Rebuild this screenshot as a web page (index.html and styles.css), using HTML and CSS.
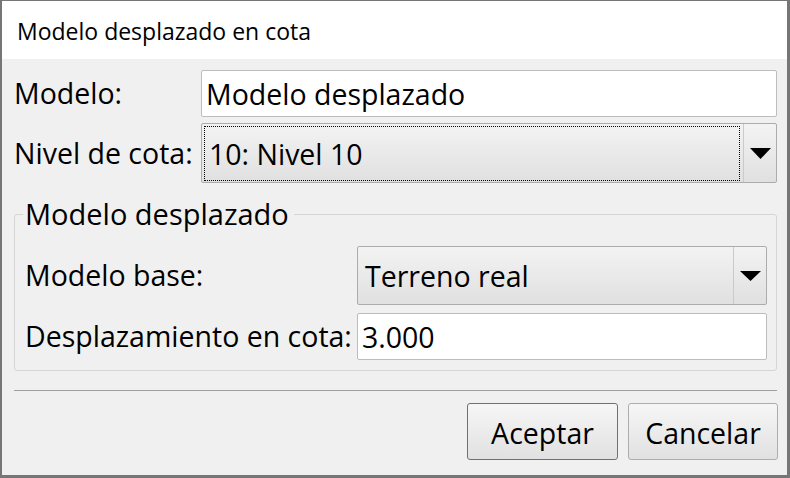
FILE: index.html
```html
<!DOCTYPE html>
<html lang="es">
<head>
<meta charset="utf-8">
<title>Modelo desplazado en cota</title>
<link rel="stylesheet" href="styles.css">
</head>
<body>
<div class="window">
  <div class="titlebar">Modelo desplazado en cota</div>
  <div class="content">
    <div class="row">
      <div class="lbl">Modelo:</div>
      <div class="field">Modelo desplazado</div>
    </div>
    <div class="row">
      <div class="lbl">Nivel de cota:</div>
      <div class="combo">
        <div class="combo-main focused"><div class="focus-rect">10: Nivel 10</div></div>
        <div class="combo-btn"><svg class="arrow" width="21" height="11" viewBox="0 0 21 11"><polygon points="0,0 21,0 10.5,11" fill="#000"/></svg></div>
      </div>
    </div>
    <fieldset class="group">
      <legend>Modelo desplazado</legend>
      <div class="grow">
        <div class="glbl">Modelo base:</div>
        <div class="combo small">
          <div class="combo-main"><div class="combo-text">Terreno real</div></div>
          <div class="combo-btn"><svg class="arrow" width="21" height="10" viewBox="0 0 21 10"><polygon points="0,0 21,0 10.5,10" fill="#000"/></svg></div>
        </div>
      </div>
      <div class="grow">
        <div class="glbl">Desplazamiento en cota:</div>
        <div class="field">3.000</div>
      </div>
    </fieldset>
    <div class="sep"></div>
    <div class="buttons">
      <button class="btn default">Aceptar</button>
      <button class="btn">Cancelar</button>
    </div>
  </div>
</div>
</body>
</html>
```
FILE: styles.css
```css
html, body {
  margin: 0;
  padding: 0;
  background: #ffffff;
}

.window {
  width: 790px;
  height: 478px;
  box-sizing: border-box;
  border-style: solid;
  border-color: #767676;
  border-width: 1px 3px 3px 2px;
  background: #f0f0f0;
  display: flex;
  flex-direction: column;
  font-family: "Open Sans", "Noto Sans", sans-serif;
  color: #000;
  overflow: hidden;
}

.titlebar {
  height: 58px;
  flex: none;
  background: #ffffff;
  display: flex;
  align-items: center;
  padding-left: 15px;
  padding-top: 2px;
  box-sizing: border-box;
  font-size: 23px;
}

.content {
  padding: 11px 10px 0 12px;
  display: flex;
  flex-direction: column;
  font-size: 28.5px;
}

.row {
  display: flex;
  align-items: center;
}

.row + .row {
  margin-top: 6px;
}

.lbl {
  width: 187px;
  flex: none;
  line-height: 1;
  white-space: nowrap;
}

.field {
  flex: 1;
  height: 47px;
  box-sizing: border-box;
  border: 1px solid #bdbdbd;
  border-radius: 2px;
  background: #ffffff;
  padding-left: 4px;
  display: flex;
  align-items: center;
  white-space: nowrap;
}

.combo {
  flex: 1;
  height: 60px;
  box-sizing: border-box;
  border: 1px solid #acacac;
  border-radius: 2px;
  background: linear-gradient(#f3f3f3, #e0e0e0);
  display: flex;
}

.combo.small {
  height: 59px;
}

.combo-main {
  flex: 1;
  display: flex;
}

.combo-main.focused {
  padding: 2px 3px 1px 2px;
}

.focus-rect {
  flex: 1;
  border: 1px dotted #000;
  display: flex;
  align-items: center;
  padding-left: 4px;
  white-space: nowrap;
}

.combo-text {
  display: flex;
  align-items: center;
  padding-left: 7px;
  white-space: nowrap;
}

.combo-btn {
  width: 33px;
  flex: none;
  box-sizing: border-box;
  border-left: 1px solid #cacaca;
  display: flex;
  align-items: center;
  justify-content: center;
  padding-left: 1px;
}

.arrow {
  display: block;
}

.group {
  margin: 15px 0 0 0;
  border: 1px solid #d5d5d5;
  border-radius: 3px;
  padding: 16px 9px 10px 10px;
  min-width: 0;
}

.group legend {
  font-size: 29px;
  line-height: 32px;
  margin-left: -2px;
  padding: 0 5px 0 2px;
}

.grow {
  display: flex;
  align-items: center;
}

.grow + .grow {
  margin-top: 8px;
}

.glbl {
  width: 332px;
  flex: none;
  line-height: 1;
  white-space: nowrap;
}

.sep {
  height: 1px;
  background: #a0a0a0;
  margin-top: 19px;
}

.buttons {
  display: flex;
  justify-content: flex-end;
  gap: 10px;
  margin-top: 12px;
  margin-right: -1px;
}

.btn {
  width: 150px;
  height: 57px;
  box-sizing: border-box;
  border: 1px solid #adadad;
  border-radius: 3px;
  background: linear-gradient(#f6f6f6, #e1e1e1);
  font-family: "Open Sans", "Noto Sans", sans-serif;
  font-size: 28.5px;
  color: #000;
  padding: 2px 0 0 0;
  margin: 0;
}

.btn.default {
  width: 151px;
  border-color: #707070;
}
```
